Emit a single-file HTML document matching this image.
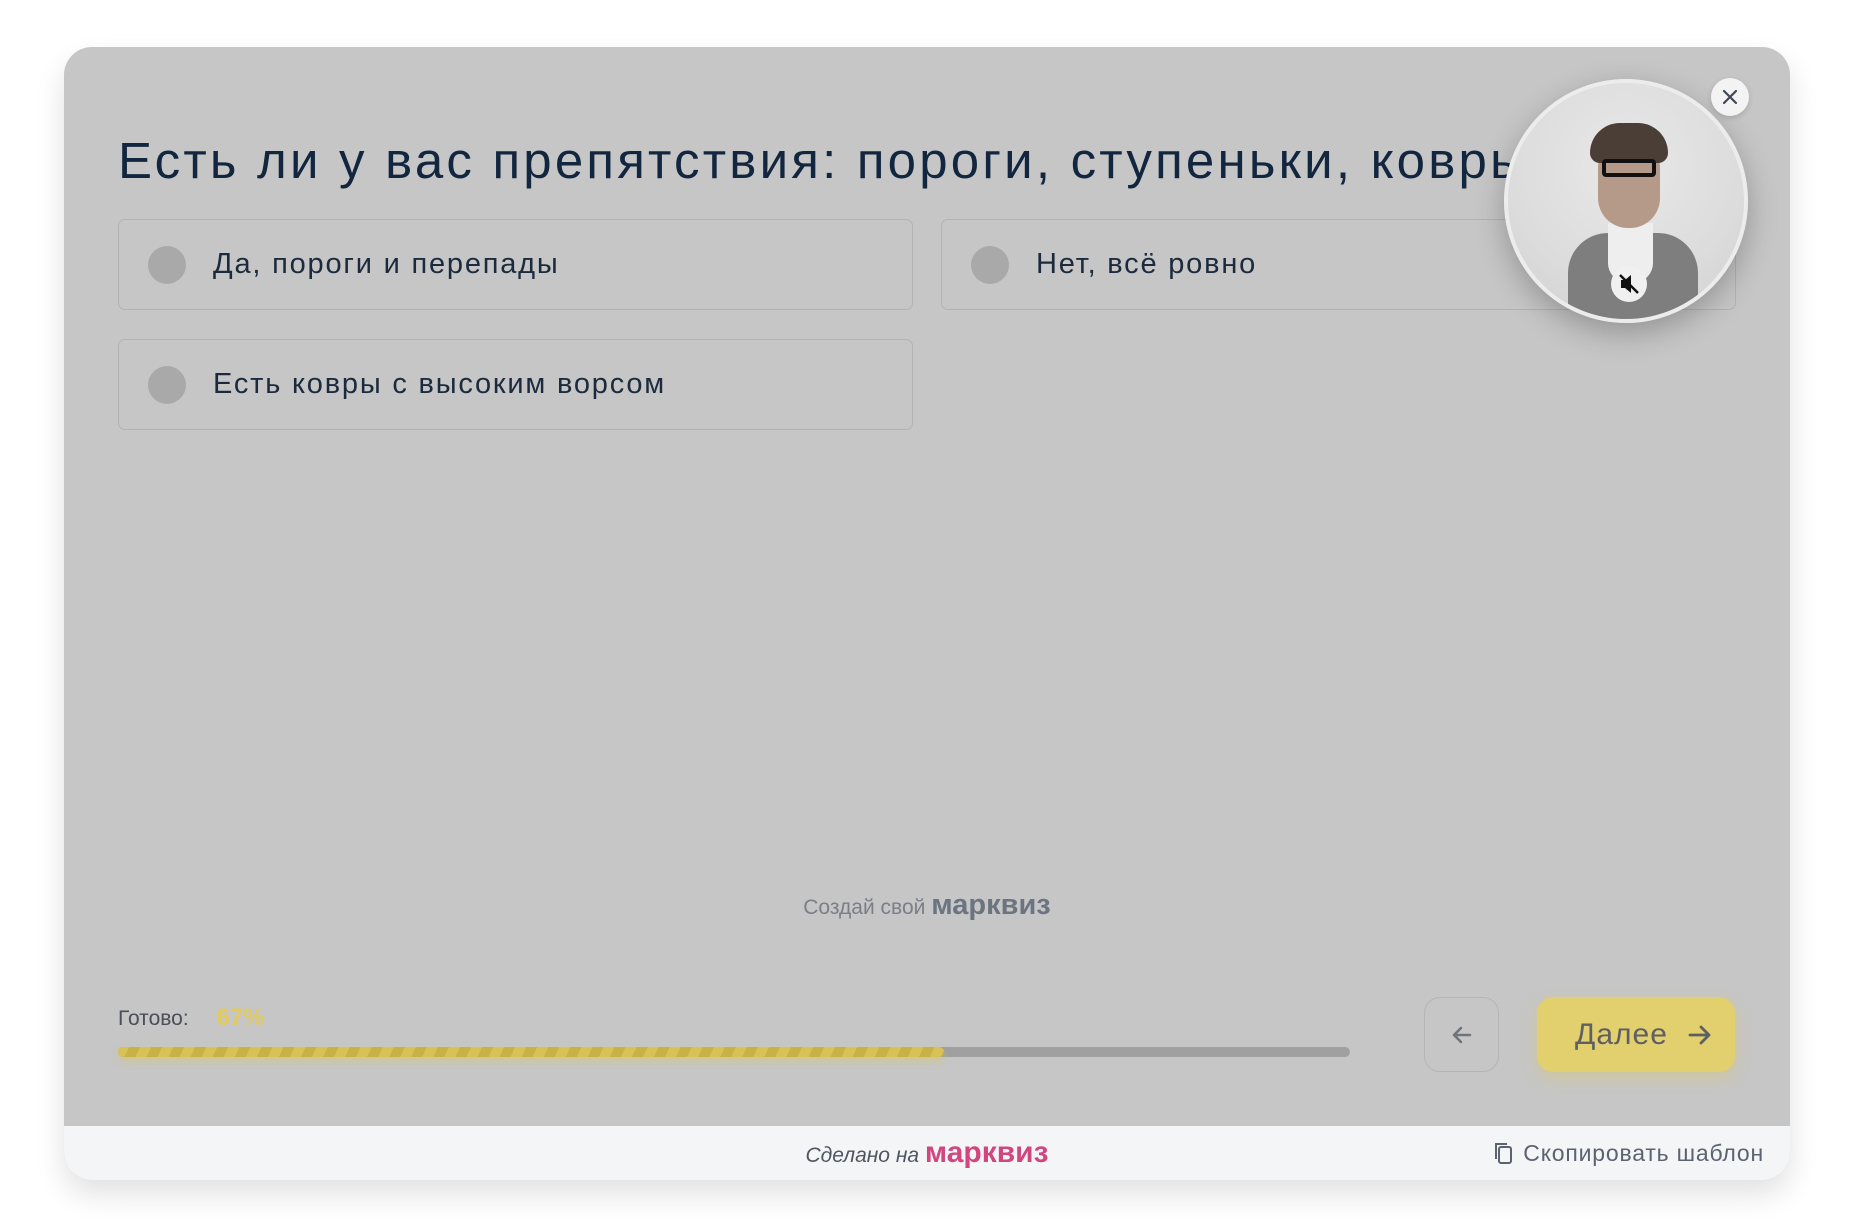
<!DOCTYPE html>
<html><head><meta charset="utf-8"><style>
*{box-sizing:border-box;margin:0;padding:0}
body{width:1854px;height:1226px;background:#fff;font-family:"Liberation Sans","DejaVu Sans",sans-serif;position:relative;overflow:hidden}
.card{position:absolute;left:64px;top:47px;width:1726px;height:1133px;border-radius:28px;overflow:hidden;background:#c6c6c6;box-shadow:0 14px 30px rgba(0,0,0,.12)}
.foot{position:absolute;left:0;right:0;bottom:0;height:54px;background:#f4f5f7}
h1{position:absolute;left:54px;top:84px;font-size:51px;font-weight:400;color:#12263f;white-space:nowrap;letter-spacing:3.2px}
.opt{position:absolute;width:795px;height:91px;border:1.5px solid #b3b3b3;border-radius:7px}
.opt .r{position:absolute;left:29px;top:26px;width:38px;height:38px;border-radius:50%;background:#a9a9a9}
.opt span{position:absolute;left:94px;top:28px;font-size:29px;color:#1b2a3d;letter-spacing:1.8px}
.abs{position:absolute}
</style></head><body>
<div class="card">
<h1>Есть ли у вас препятствия: пороги, ступеньки, ковры?</h1>
<div class="opt" style="left:54px;top:172px"><div class="r"></div><span>Да, пороги и перепады</span></div>
<div class="opt" style="left:877px;top:172px"><div class="r"></div><span>Нет, всё ровно</span></div>
<div class="opt" style="left:54px;top:292px"><div class="r"></div><span>Есть ковры с высоким ворсом</span></div>
<div class="abs" style="left:0;width:1726px;top:842px;text-align:center;font-size:21px;color:#7a7f87">Создай свой <b style="font-size:29px;color:#6b7480">марквиз</b></div>
<div class="abs" style="left:54px;top:957px;font-size:21px;color:#4a4f57">Готово: <span style="color:#e0cb5c;margin-left:22px;font-weight:bold;font-size:24px">67%</span></div>
<div class="abs" style="left:54px;top:1000px;width:1232px;height:10px;border-radius:5px;background:#a0a0a0"></div>
<div class="abs" style="left:54px;top:1000px;width:826px;height:10px;border-radius:5px;background:repeating-linear-gradient(115deg,#d8c255 0 10px,#c9b245 10px 20px);box-shadow:0 4px 8px rgba(220,200,90,.5)"></div>
<div class="abs" style="left:1360px;top:950px;width:75px;height:75px;border:1.5px solid #b5b5b5;border-radius:16px"><svg width="75" height="75" viewBox="0 0 75 75"><path d="M45 37H29M36 30l-7 7 7 7" fill="none" stroke="#6f747b" stroke-width="2.5" stroke-linecap="round" stroke-linejoin="round"/></svg></div>
<div class="abs" style="left:1473px;top:950px;width:198px;height:75px;border-radius:16px;background:#e2cf6e;box-shadow:0 6px 16px rgba(220,200,100,.45);font-size:30px;color:#5d5f62;line-height:75px;padding-left:38px;letter-spacing:1px">Далее<svg style="position:absolute;left:150px;top:26px" width="26" height="24" viewBox="0 0 26 24"><path d="M3 12h19M14 4l8 8-8 8" fill="none" stroke="#5d5f62" stroke-width="2.8" stroke-linecap="round" stroke-linejoin="round"/></svg></div>
<div class="foot">
<div class="abs" style="left:0;width:1726px;top:10px;text-align:center;font-size:21px;color:#4f5560"><i>Сделано на</i> <b style="font-size:30px;color:#d24680">марквиз</b></div>
<div class="abs" style="right:26px;top:14px;font-size:23px;color:#5b6270;letter-spacing:0.8px"><svg style="vertical-align:-4px;margin-right:10px" width="20" height="24" viewBox="0 0 20 24"><rect x="6" y="6" width="12" height="16" rx="2" fill="none" stroke="#5b6270" stroke-width="2"/><path d="M3 18V3h11" fill="none" stroke="#5b6270" stroke-width="2"/></svg>Скопировать шаблон</div>
</div>
</div>
<div class="abs" style="left:1504px;top:79px;width:244px;height:244px;border-radius:50%;background:radial-gradient(circle at 50% 35%,#e8e8e8 0,#dcdcdc 60%,#cfcfcf 100%);border:4px solid #ececec;box-shadow:0 10px 30px rgba(0,0,0,.25);overflow:hidden">
<div class="abs" style="left:60px;top:150px;width:130px;height:120px;border-radius:40px 40px 0 0;background:#7e7e7e"></div>
<div class="abs" style="left:100px;top:140px;width:45px;height:60px;background:#eee;border-radius:0 0 20px 20px"></div>
<div class="abs" style="left:90px;top:55px;width:62px;height:90px;border-radius:30px;background:#b59a8a"></div>
<div class="abs" style="left:82px;top:40px;width:78px;height:40px;border-radius:30px 30px 10px 10px;background:#4a3e36"></div>
<div class="abs" style="left:94px;top:76px;width:54px;height:18px;border:4px solid #111;border-radius:4px"></div>
<div class="abs" style="left:103px;top:183px;width:36px;height:36px;border-radius:50%;background:#f0f0f0"><svg width="36" height="36" viewBox="0 0 36 36"><path d="M10 14h4l6-5v18l-6-5h-4z" fill="#111"/><path d="M9 9l18 18" stroke="#111" stroke-width="2.5"/></svg></div>
</div>
<div class="abs" style="left:1711px;top:78px;width:38px;height:38px;border-radius:50%;background:#f3f3f3;box-shadow:0 2px 6px rgba(0,0,0,.15)"><svg width="38" height="38" viewBox="0 0 38 38"><path d="M13 13l12 12M25 13L13 25" stroke="#3d4858" stroke-width="2.2" stroke-linecap="round"/></svg></div>
</body></html>
